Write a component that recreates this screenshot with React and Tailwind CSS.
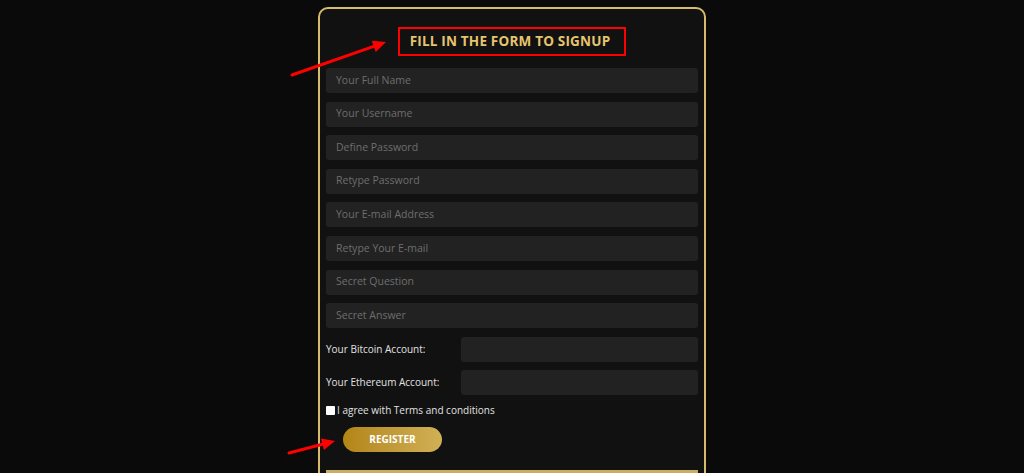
const fields = [
  'Your Full Name',
  'Your Username',
  'Define Password',
  'Retype Password',
  'Your E-mail Address',
  'Retype Your E-mail',
  'Secret Question',
  'Secret Answer',
];

function Arrow({ className, x1, y1, x2, y2 }) {
  const ang = Math.atan2(y2 - y1, x2 - x1);
  const len = 13;
  const wid = 6;
  const bx = x2 - len * Math.cos(ang);
  const by = y2 - len * Math.sin(ang);
  const px = -Math.sin(ang) * wid;
  const py = Math.cos(ang) * wid;
  return (
    <svg className={className} width="1024" height="473" viewBox="0 0 1024 473">
      <line x1={x1} y1={y1} x2={bx} y2={by} stroke="#ff0000" strokeWidth="3" strokeLinecap="round" />
      <polygon points={`${x2},${y2} ${bx + px},${by + py} ${bx - px},${by - py}`} fill="#ff0000" />
    </svg>
  );
}

export default function App() {
  return (
    <div
      className="relative w-full h-[473px] overflow-hidden bg-[#0a0a0a]"
      style={{ fontFamily: '"Open Sans", "Liberation Sans", sans-serif' }}
    >
      <div className="mx-auto mt-[7px] w-[388px] h-[500px] rounded-[10px] border-2 border-[#d6bb6c] bg-[#111111] px-[6px] pt-[18px]">
        {/* Title */}
        <div className="mx-auto w-fit border-2 border-[#ff0000] pl-[10px] pr-[14px] h-[29px] flex items-center">
          <h2 className="text-[13.5px] font-bold text-[#e6c46e] tracking-[0.2px]">FILL IN THE FORM TO SIGNUP</h2>
        </div>

        {/* Inputs */}
        <div className="mt-[12px] flex flex-col gap-[8.6px]">
          {fields.map((f) => (
            <div key={f} className="h-[25px] rounded-[3px] bg-[#222222] flex items-center px-[10px]">
              <span className="text-[10.5px] text-[#6e6e6e]">{f}</span>
            </div>
          ))}
          {['Your Bitcoin Account:', 'Your Ethereum Account:'].map((l) => (
            <div key={l} className="flex items-center h-[25px]">
              <span className="w-[135px] text-[10px] text-[#e2e2e2]">{l}</span>
              <div className="flex-1 h-[25px] rounded-[3px] bg-[#222222]" />
            </div>
          ))}
        </div>

        {/* Terms */}
        <div className="mt-[8px] flex items-center gap-[2px]">
          <span className="w-[9px] h-[9px] rounded-[1px] bg-white" />
          <span className="text-[10px] text-[#e2e2e2]">I agree with Terms and conditions</span>
        </div>

        {/* Register */}
        <button className="mt-[9px] ml-[17px] w-[99px] h-[25px] rounded-full bg-gradient-to-r from-[#b38514] to-[#d0b155] text-[10px] font-bold text-white">
          REGISTER
        </button>

        <div className="mt-[18px] h-[3px] bg-[#c9ad62]" />
      </div>

      {/* annotation arrows */}
      <Arrow className="absolute left-0 top-0 pointer-events-none" x1={292} y1={75} x2={386} y2={42} />
      <Arrow className="absolute left-0 top-0 pointer-events-none" x1={289} y1={453} x2={335} y2={441} />
    </div>
  );
}
